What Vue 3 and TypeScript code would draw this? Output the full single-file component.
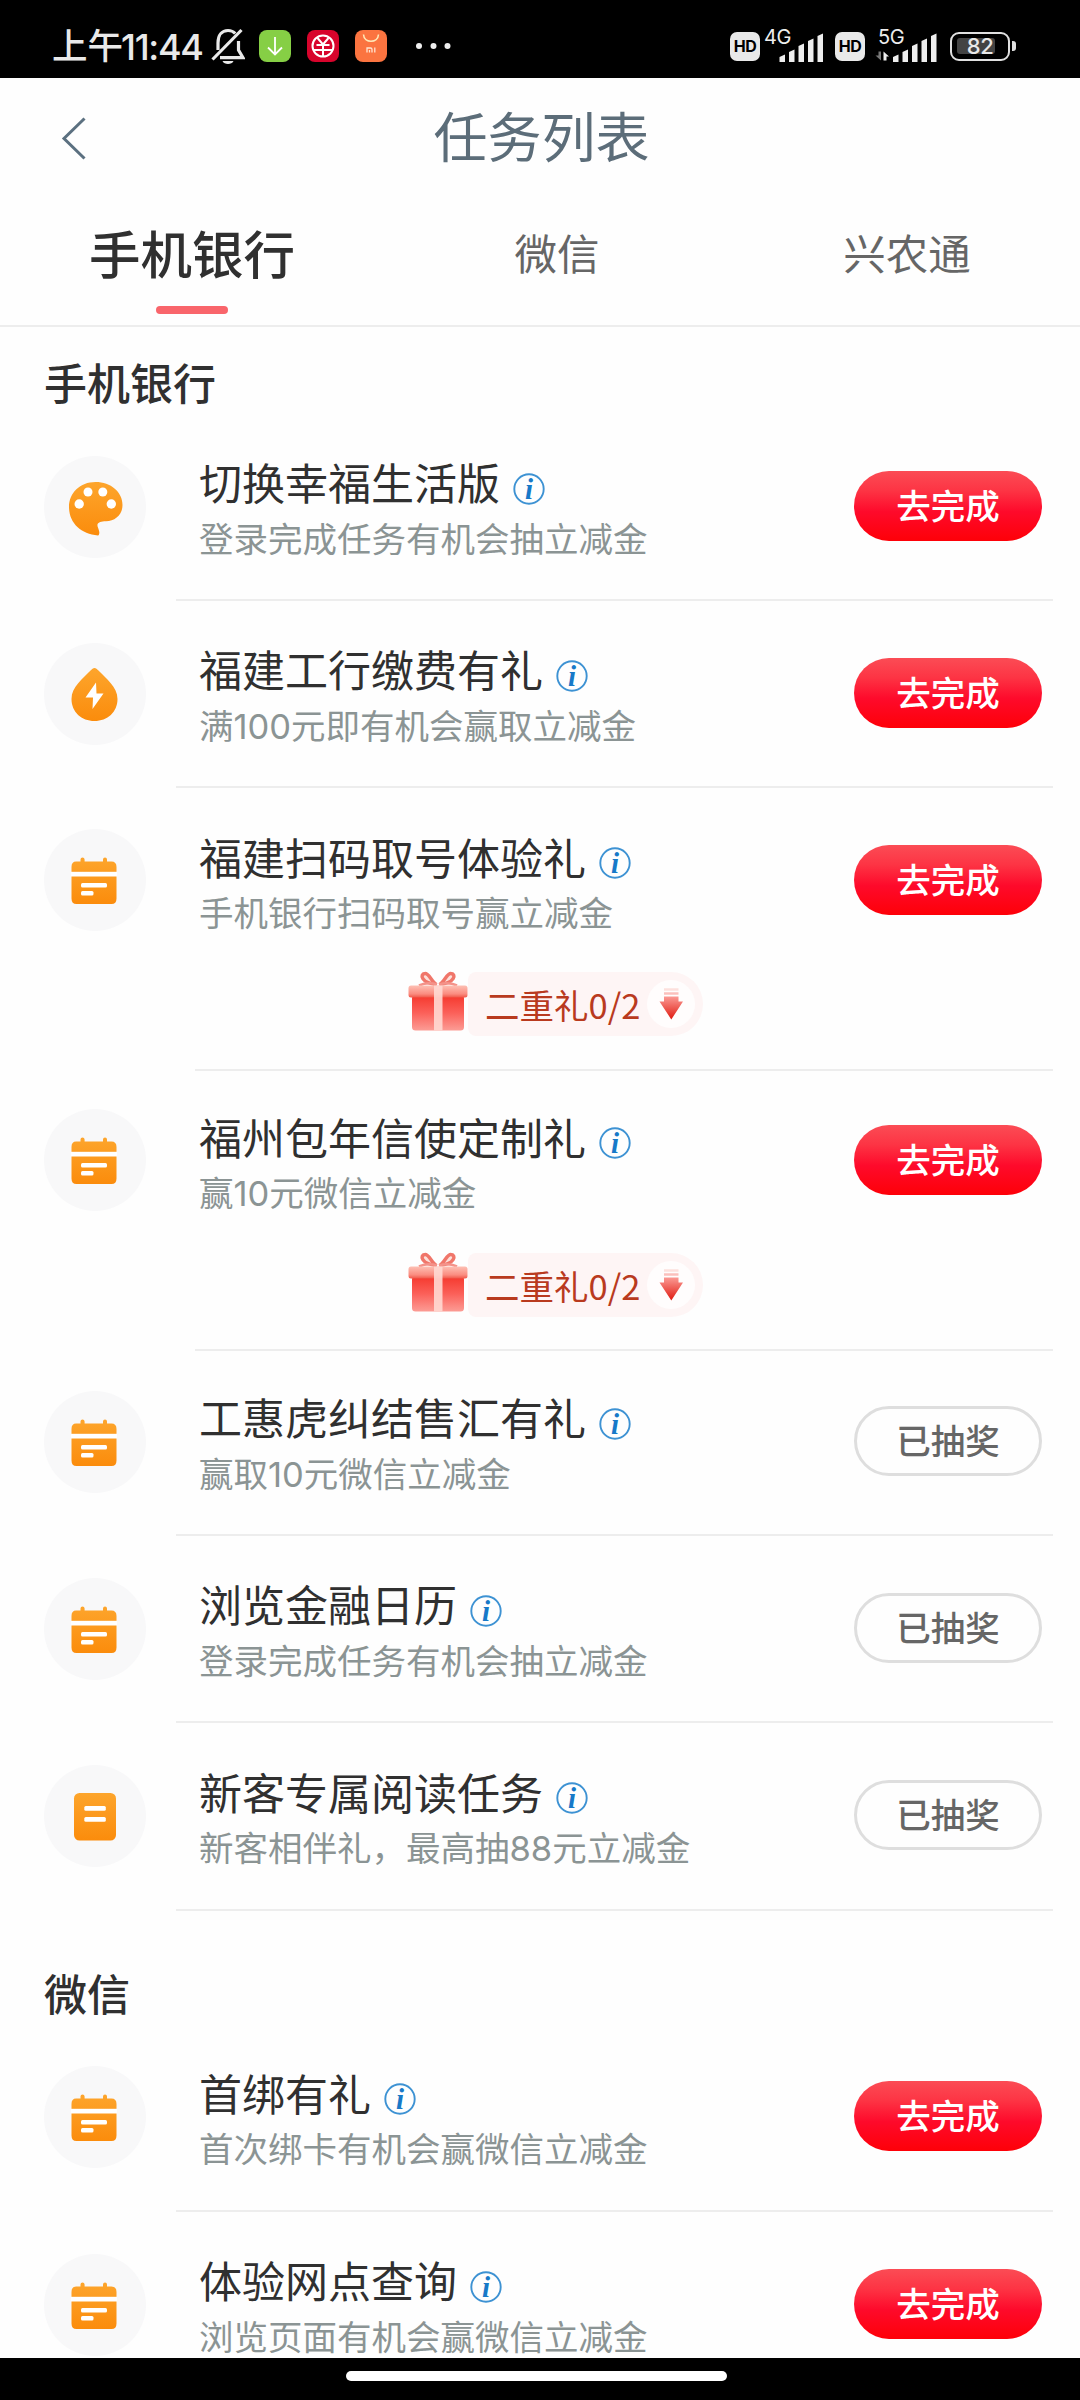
<script setup lang="ts">
type IconName = 'palette' | 'drop' | 'calendar' | 'book'

interface Task {
  icon: IconName
  title: string
  desc: string
  done?: boolean
  reward?: string
}

interface Section {
  name: string
  tasks: Task[]
}

const tabs: string[] = ['手机银行', '微信', '兴农通']
const activeTab = '手机银行'

const sections: Section[] = [
  {
    name: '手机银行',
    tasks: [
      { icon: 'palette', title: '切换幸福生活版', desc: '登录完成任务有机会抽立减金' },
      { icon: 'drop', title: '福建工行缴费有礼', desc: '满100元即有机会赢取立减金' },
      { icon: 'calendar', title: '福建扫码取号体验礼', desc: '手机银行扫码取号赢立减金', reward: '二重礼0/2' },
      { icon: 'calendar', title: '福州包年信使定制礼', desc: '赢10元微信立减金', reward: '二重礼0/2' },
      { icon: 'calendar', title: '工惠虎纠结售汇有礼', desc: '赢取10元微信立减金', done: true },
      { icon: 'calendar', title: '浏览金融日历', desc: '登录完成任务有机会抽立减金', done: true },
      { icon: 'book', title: '新客专属阅读任务', desc: '新客相伴礼，最高抽88元立减金', done: true },
    ],
  },
  {
    name: '微信',
    tasks: [
      { icon: 'calendar', title: '首绑有礼', desc: '首次绑卡有机会赢微信立减金' },
      { icon: 'calendar', title: '体验网点查询', desc: '浏览页面有机会赢微信立减金' },
    ],
  },
]

const signals = [
  { label: '4G', data: false },
  { label: '5G', data: true },
]
const bars = [7, 12, 18, 23, 28]

// Numbers are set in a Latin face inside the Chinese copy.
function parts(text: string): { text: string; num: boolean }[] {
  return text
    .split(/(\d+)/)
    .filter((p) => p !== '')
    .map((p) => ({ text: p, num: /^\d/.test(p) }))
}
</script>

<template>
  <div class="screen">
    <svg class="defs" width="0" height="0">
      <defs>
        <linearGradient id="orange" x1="0" y1="0" x2="0" y2="1">
          <stop offset="0" stop-color="#fda52c" />
          <stop offset="1" stop-color="#fb8c0c" />
        </linearGradient>
        <linearGradient id="lid" x1="0" y1="0" x2="0" y2="1">
          <stop offset="0" stop-color="#fdc0b4" />
          <stop offset="0.7" stop-color="#fb8c80" />
          <stop offset="1" stop-color="#f0584a" />
        </linearGradient>
        <linearGradient id="box" x1="0" y1="0" x2="0" y2="1">
          <stop offset="0" stop-color="#f5372c" />
          <stop offset="0.5" stop-color="#fb6059" />
          <stop offset="1" stop-color="#fc9c95" />
        </linearGradient>
        <linearGradient id="arrow" x1="0" y1="0" x2="0" y2="1">
          <stop offset="0" stop-color="#fb9a94" />
          <stop offset="1" stop-color="#e01a10" />
        </linearGradient>
      </defs>
    </svg>

    <header class="status">
      <span class="clock"><span class="ampm">上午</span><span class="time">11:44</span></span>
      <svg class="bell" width="34" height="38" viewBox="0 0 34 38" fill="none" stroke="#e9e9e9" stroke-width="3.2">
        <path d="M7 23V16C7 8 11 3.5 17 3.5C20 3.5 22.5 4.6 24.2 6.5" />
        <path d="M27.5 14V23L32 30.7H9" />
        <path d="M1.5 32.5L30.5 3" />
        <path d="M11.5 34H22.5C21.5 36.2 19.5 37 17 37S12.500 36.200 11.500 34Z" fill="#e9e9e9" stroke="none" />
      </svg>
      <svg class="app" width="32" height="32" viewBox="0 0 32 32">
        <rect width="32" height="32" rx="8" fill="#86cf45" />
        <path d="M16 7V24M9 17.500L16 24.500L23 17.500" fill="none" stroke="#fff" stroke-width="1.800" />
      </svg>
      <svg class="app" width="32" height="32" viewBox="0 0 32 32">
        <rect width="32" height="32" rx="8" fill="#d8042c" />
        <g fill="none" stroke="#fff" stroke-width="2">
          <circle cx="16" cy="16" r="10.500" />
          <path d="M10.500 8L16 14.500L21.500 8M9.500 15H22.500M6 20H26M16 14V26.500" />
        </g>
      </svg>
      <svg class="app" width="32" height="32" viewBox="0 0 32 32">
        <rect width="32" height="32" rx="8" fill="#fb7440" />
        <path d="M8.500 4.500C9 13.500 23 13.500 23.500 4.500" fill="none" stroke="#ffe9b8" stroke-width="1.600" />
        <path d="M12 22.500V18H15.500Q17 18 17 19.500V22.500M14.500 20V22.500M19.800 17.600V22.500" fill="none" stroke="#ffe3d0" stroke-width="1.300" />
      </svg>
      <svg class="more" width="36" height="8" viewBox="0 0 36 8" fill="#eee">
        <circle cx="4" cy="4" r="3" /><circle cx="18.500" cy="4" r="3" /><circle cx="32.500" cy="4" r="3" />
      </svg>
      <div class="grow"></div>
      <template v-for="s in signals" :key="s.label">
        <span class="hd">HD</span>
        <svg class="signal" width="62" height="36" viewBox="0 0 62 36" fill="#eee">
          <text :x="s.data ? 13 : 4" y="15.500" class="net">{{ s.label }}</text>
          <path
            v-for="(h, i) in bars"
            :key="h"
            :d="`M${19.5 + i * 9.5 + (s.data ? 8.5 : 0)} 34v${-(h - 2)}l5.500 -2.500v${h + 0.5}z`"
          />
          <g v-if="s.data">
            <path d="M18.500 32.500V23.500L24 28.500H21.500V32.500Z" />
            <path d="M16 23.500V32.500L10.500 27.500H13.500V23.500Z" fill="#777" />
          </g>
        </svg>
      </template>
      <div class="battery"><span class="charge"></span><span class="pct">82</span></div>
      <span class="nub"></span>
    </header>

    <nav class="titlebar">
      <svg class="back" width="26" height="44" viewBox="0 0 26 44" fill="none" stroke="#5b7080" stroke-width="3">
        <path d="M24.500 1.500L4 21.500L24.500 41.500" />
      </svg>
      <h1>任务列表</h1>
    </nav>

    <div class="tabs">
      <div v-for="t in tabs" :key="t" class="tab" :class="{ active: t === activeTab }">
        <span>{{ t }}</span>
      </div>
    </div>

    <main class="list">
      <section v-for="s in sections" :key="s.name" class="section">
        <h2>{{ s.name }}</h2>
        <article v-for="t in s.tasks" :key="t.title" class="task" :class="{ 'has-reward': t.reward }">
          <div class="row">
            <svg class="avatar" width="102" height="102" viewBox="0 0 102 102">
              <circle cx="51" cy="51" r="51" fill="#f8f8f9" />
              <g v-if="t.icon === 'palette'">
                <path
                  fill="url(#orange)"
                  d="M54 79.500C37 78 25 67 25 51C25 37 36 26 51.500 26C67 26 78.500 36 78.500 49C78.500 59 71 65 62 65.300C57 65.500 54.500 66 53.500 68.500C53 70.500 55 73 55.300 76C55.400 78 55 79.500 54 79.500Z"
                />
                <g fill="#fff">
                  <circle cx="35.200" cy="48" r="4.700" /><circle cx="44" cy="36" r="4.500" />
                  <circle cx="58.800" cy="36" r="4.500" /><circle cx="67.300" cy="48" r="4.700" />
                </g>
              </g>
              <g v-else-if="t.icon === 'drop'">
                <path
                  fill="url(#orange)"
                  d="M50.500 25C52 25 53 26 54.200 27.300C62 35.500 73.500 44 73.500 56C73.500 69 63.500 78 50.500 78S27.500 69 27.500 56C27.500 44 39 35.500 46.800 27.300C48 26 49 25 50.500 25Z"
                />
                <path fill="#fff" d="M52 39.500L41.500 54.500H49L48.500 66L59.500 50.500H52.500Z" />
              </g>
              <g v-else-if="t.icon === 'calendar'">
                <path
                  fill="url(#orange)"
                  d="M32 32.500H36.500V30.500Q36.500 28.500 38.500 28.500T40.600 30.500V32.500H59V30.500Q59 28.500 61 28.500T63 30.500V32.500H67.500Q72.500 32.500 72.500 38V69.500Q72.500 75 67.500 75H32.500Q27.500 75 27.500 69.500V38Q27.500 32.500 32 32.500Z"
                />
                <g fill="#fff">
                  <rect x="27" y="42.800" width="46" height="4.700" />
                  <rect x="37" y="54" width="26" height="4.500" rx="1.500" />
                  <rect x="37" y="62" width="12.500" height="4.500" rx="1.500" />
                </g>
              </g>
              <g v-else>
                <rect x="30" y="28" width="42" height="47.500" rx="5.500" fill="url(#orange)" />
                <g fill="#fff">
                  <rect x="40.300" y="41" width="21.500" height="4.700" rx="1.500" />
                  <rect x="40.300" y="52" width="21.500" height="4.700" rx="1.500" />
                </g>
              </g>
            </svg>
            <div class="body">
              <div class="title">
                <span>{{ t.title }}</span>
                <svg class="info" width="32" height="32" viewBox="0 0 32 32">
                  <circle cx="16" cy="16" r="14.700" fill="none" stroke="#3d92d3" stroke-width="1.900" />
                  <text x="16" y="26" text-anchor="middle" class="i">i</text>
                </svg>
              </div>
              <div class="desc"><span v-for="(p, i) in parts(t.desc)" :key="i" :class="{ num: p.num }">{{ p.text }}</span></div>
            </div>
            <button class="btn" :class="{ done: t.done }">{{ t.done ? '已抽奖' : '去完成' }}</button>
          </div>
          <div v-if="t.reward" class="reward">
            <svg class="gift" width="60" height="60" viewBox="0 0 60 60">
              <g fill="#fde0da" stroke="#f0766a" stroke-width="3.500">
                <path d="M28.500 13.500C24 11.500 21 2 17 2.500C11.500 3 13 12 28.500 13.500Z" />
                <path d="M31.500 13.500C36 11.500 39 2 43 2.500C48.500 3 47 12 31.500 13.500Z" />
              </g>
              <path d="M11 14.500Q20 10.500 29 13.500M49 14.500Q40 10.500 31 13.500" fill="none" stroke="#f4938a" stroke-width="2.500" />
              <rect x="4" y="24" width="52" height="35.500" rx="3.500" fill="url(#box)" />
              <rect x="0.500" y="14.500" width="59" height="12" rx="2.500" fill="url(#lid)" />
              <rect x="26" y="14.500" width="8.500" height="45" fill="#ffd9d3" opacity="0.900" />
            </svg>
            <div class="pill">
              <span>{{ t.reward }}</span>
              <svg class="down" width="50" height="50" viewBox="0 0 50 50">
                <circle cx="25" cy="25" r="24" fill="#fffdfd" />
                <path fill="url(#arrow)" d="M18 17.500H32.500V22.500H37L25.300 40.500L13.500 22.500H18Z" />
                <path d="M18 10.500H32.500" stroke="#fde0dd" stroke-width="2.500" />
                <path d="M18 14.500H32.500" stroke="#fbc0bc" stroke-width="2.500" />
              </svg>
            </div>
          </div>
          <div class="line"></div>
        </article>
      </section>
    </main>

    <footer class="home"><span></span></footer>
  </div>
</template>

<style>
body {
  margin: 0;
  background: #fff;
}
</style>

<style scoped>
.screen {
  width: 1080px;
  height: 2400px;
  overflow: hidden;
  display: flex;
  flex-direction: column;
  background: #fefefe;
  color: #303030;
  font-family: 'Noto Sans CJK SC', sans-serif;
}
.screen svg {
  display: block;
  flex: none;
}
.screen svg.defs {
  position: absolute;
}
.status {
  flex: none;
  box-sizing: border-box;
  height: 78px;
  padding: 14px 64px 0 52px;
  background: #000;
  color: #e9e9e9;
  display: flex;
  align-items: center;
}
.clock {
  display: flex;
  width: 158px;
  line-height: 40px;
  font-weight: 500;
  white-space: nowrap;
}
.ampm {
  width: 69px;
  margin-top: -2px;
  font-size: 35.500px;
}
.time {
  font-family: Inter, sans-serif;
  font-size: 36px;
  letter-spacing: -1.300px;
  margin-top: 1px;
}
.bell {
  margin: 0 14px 0 1px;
}
.app {
  margin-right: 16px;
}
.more {
  margin-left: 12px;
}
.grow {
  flex: 1;
}
.hd {
  width: 30px;
  height: 29px;
  border-radius: 7px;
  background: #e9e9e9;
  color: #000;
  font: 700 16px/28px Inter, sans-serif;
  text-align: center;
  letter-spacing: -0.500px;
}
.signal + .hd {
  margin-left: 13px;
}
.signal {
  overflow: visible;
}
.net {
  font: 400 20px Inter, sans-serif;
  letter-spacing: -0.500px;
}
.battery {
  position: relative;
  box-sizing: border-box;
  width: 60px;
  height: 29px;
  margin-left: 23px;
  border: 2.500px solid #e0e0e0;
  border-radius: 9px;
  text-align: center;
}
.charge {
  position: absolute;
  left: 5px;
  top: 4px;
  width: 38px;
  height: 16px;
  border-radius: 3px;
  background: #434343;
}
.pct {
  position: relative;
  display: block;
  font: 500 22px/25px Inter, sans-serif;
  letter-spacing: -0.500px;
}
.nub {
  width: 4px;
  height: 10px;
  margin: 0 0 0 2px;
  border-radius: 0 3px 3px 0;
  background: #e0e0e0;
}
.titlebar {
  flex: none;
  height: 118px;
  display: grid;
  grid-template-columns: 85px 1fr 85px;
  align-items: center;
}
.back {
  margin-left: 60px;
  margin-top: 4px;
}
h1 {
  margin: -4px 0 0 3px;
  font-size: 54px;
  line-height: 80px;
  font-weight: 400;
  color: #5c6d79;
  text-align: center;
}
.tabs {
  flex: none;
  box-sizing: border-box;
  height: 131px;
  padding: 0 0 0 42px;
  border-bottom: 2px solid #ededed;
  display: flex;
}
.tab {
  flex: none;
  width: 300px;
  display: flex;
  flex-direction: column;
  align-items: center;
  font-size: 42.500px;
  line-height: 60px;
  color: #666;
  padding-top: 26px;
}
.tab + .tab {
  margin-left: 65px;
}
.tab + .tab + .tab {
  margin-left: 50px;
}
.tab.active {
  color: #303030;
  font-size: 51.500px;
  font-weight: 500;
}
.tab.active::after {
  content: '';
  width: 72px;
  height: 8px;
  margin-top: 24px;
  border-radius: 4px;
  background: #f9656b;
}
.list {
  flex: 1;
  min-height: 0;
  overflow: hidden;
}
h2 {
  margin: 0;
  padding: 24px 0 0 44px;
  height: 62.500px;
  line-height: 60px;
  font-size: 43px;
  font-weight: 500;
}
.section + .section h2 {
  padding-top: 51px;
}
.task {
  height: 187.400px;
  display: flex;
  flex-direction: column;
}
.task.has-reward {
  height: 282.900px;
}
.task.has-reward + .task {
  margin-top: -3px;
}
.task.has-reward + .task:not(.has-reward) {
  margin-top: -2.500px;
}
.row {
  display: flex;
  align-items: flex-start;
  padding-left: 44px;
}
.avatar {
  margin-top: 42px;
}
.has-reward .avatar {
  margin-top: 41px;
}
.body {
  width: 655px;
  margin-left: 53px;
  padding-top: 37.500px;
  white-space: nowrap;
}
.title {
  display: flex;
  align-items: center;
  height: 60px;
  font-size: 43px;
  line-height: 60px;
}
.info {
  margin: 15px 0 0 13px;
}
.i {
  font: italic 700 29px 'Liberation Serif', serif;
  fill: #1779c8;
}
.desc {
  margin-top: 6.500px;
  font-size: 34.500px;
  line-height: 38px;
  color: #8b9494;
}
.num {
  font-family: Inter, sans-serif;
  line-height: 1;
}
.btn {
  box-sizing: border-box;
  width: 188px;
  height: 70px;
  margin: 57px 0 0;
  padding: 0 0 4px;
  border: 0;
  border-radius: 35px;
  background: linear-gradient(#fb4c55 0%, #fd3444 28%, #fe0a2b 58%, #fe0008 100%);
  color: #fff;
  font: 500 34.500px/62px 'Noto Sans CJK SC', sans-serif;
  text-align: center;
}
.btn.done {
  padding: 0 0 4px;
  border: 3px solid #dedede;
  background: #fefefe;
  color: #666;
  line-height: 60px;
}
.reward {
  margin: 41px 0 0 408px;
  display: flex;
  align-items: flex-start;
}
.gift {
  margin-top: -1px;
}
.pill {
  box-sizing: border-box;
  width: 235px;
  height: 64px;
  padding: 0 7px 0 17px;
  border-radius: 8px 32px 32px 8px;
  background: #fef5f5;
  display: flex;
  align-items: center;
  justify-content: space-between;
  font-size: 34.500px;
  line-height: 60px;
  color: #b93a1e;
  white-space: nowrap;
}
.line {
  height: 2px;
  margin: auto 27px 0 176px;
  background: #ededed;
}
.has-reward .line {
  margin-left: 195px;
}
.home {
  flex: none;
  box-sizing: border-box;
  height: 42px;
  padding-top: 13px;
  background: #000;
}
.home span {
  display: block;
  width: 381px;
  height: 10px;
  margin-left: 346px;
  border-radius: 5px;
  background: #fff;
}
</style>
